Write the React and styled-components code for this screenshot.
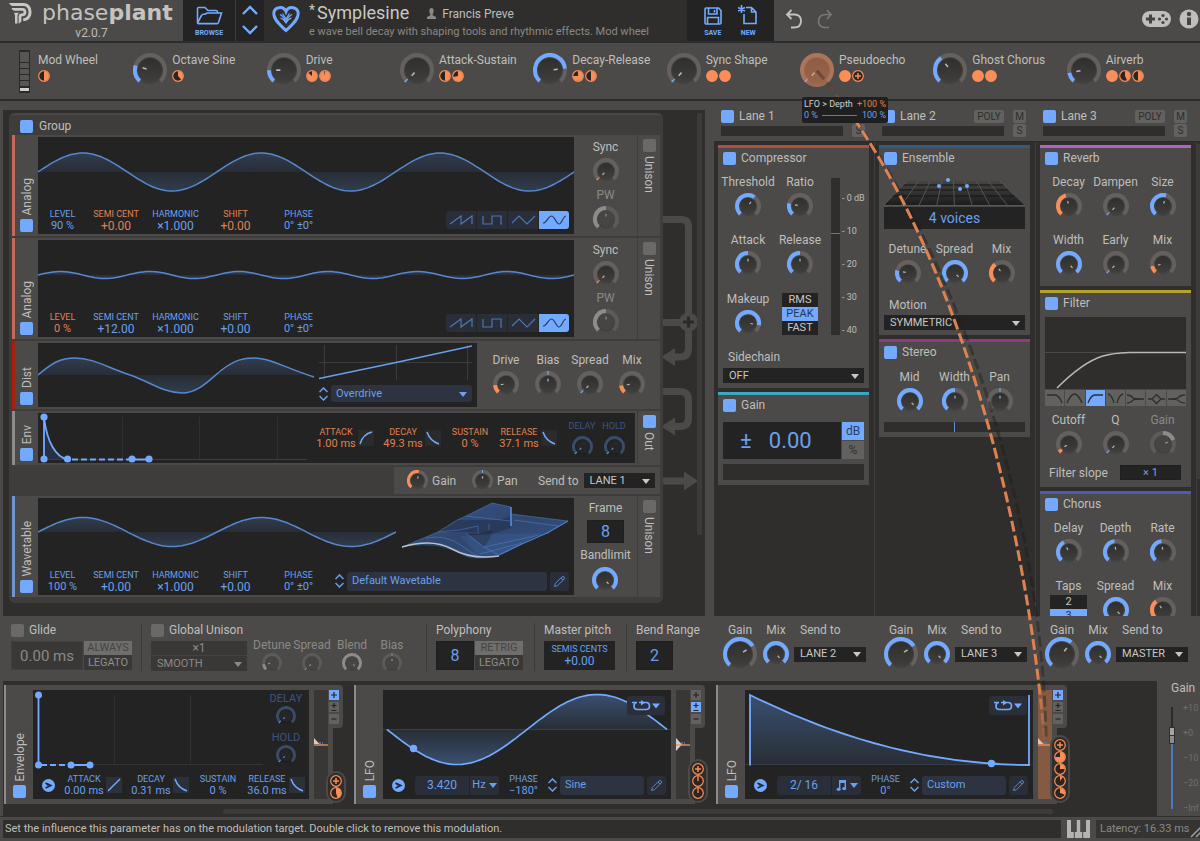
import React from "react";
import styled, { createGlobalStyle, css } from "styled-components";

const c = {
  panel: "#4b4a48",
  frame: "#3e3d3b",
  dark: "#2f2e2c",
  screen: "#232323",
  field: "#2d3340",
  text: "#bfbebc",
  muted: "#8a8986",
  blue: "#73aaff",
  blueText: "#6aa0ee",
  blueDim: "#3c5680",
  orange: "#f98e58",
  orangeText: "#e08151",
  line: "#2a2d30",
};

const GlobalStyle = createGlobalStyle`
  *, *::before, *::after { box-sizing: border-box; }
  body { margin: 0; background: ${c.panel}; color: ${c.text}; font: 12px/14px Roboto, "Liberation Sans", sans-serif; }
  button, input, select { font: inherit; color: inherit; margin: 0; padding: 0; border: 0; background: none; border-radius: 0; min-width: 0; }
  svg { display: block; flex: none; }
`;

const Page = styled.main`
  position: relative;
  display: flex;
  flex-direction: column;
  min-width: 1100px;
  overflow: hidden;
`;

/* ---------- shared controls ---------- */

const Tick = styled.input.attrs({ type: "checkbox" })`
  appearance: none;
  flex: none;
  width: 13px;
  height: 13px;
  border-radius: 2px;
  background: #6a6967;
  &:checked { background: ${c.blue}; }
`;

const TickLabel = styled.label`
  display: flex;
  align-items: center;
  gap: ${(p) => p.$gap || 5}px;
  white-space: nowrap;
`;

const KnobCell = styled.label`
  display: flex;
  flex-direction: column;
  align-items: center;
  gap: ${(p) => (p.$gap === undefined ? 4 : p.$gap)}px;
  white-space: nowrap;
  color: ${(p) => p.$color || "inherit"};
  font-size: ${(p) => p.$font || 12}px;
  min-width: 0;
`;

const KnobFace = styled.span`
  position: relative;
  display: block;
  flex: none;
`;

const HiddenRange = styled.input.attrs({ type: "range", min: 0, max: 1, step: "any" })`
  position: absolute;
  inset: 0;
  width: 100%;
  height: 100%;
  opacity: 0;
  cursor: pointer;
`;

const tones = {
  blue: { arc: c.blue, track: "#65605d", mark: "#cfcecc", body: "url(#knobBody)" },
  orange: { arc: c.orange, track: "#65605d", mark: "#cfcecc", body: "url(#knobBody)" },
  gray: { arc: "#8d8c8a", track: "#5d5b58", mark: "#a09f9c", body: "#464543" },
  navy: { arc: "#6a9cea", track: "#3a4c69", mark: "#6a9cea", body: "#252628" },
};

const polar = (m, r, deg) => {
  const a = ((deg - 90) * Math.PI) / 180;
  return [(m + r * Math.cos(a)).toFixed(2), (m + r * Math.sin(a)).toFixed(2)];
};

const arc = (m, r, a, b) => {
  const [x1, y1] = polar(m, r, a);
  const [x2, y2] = polar(m, r, b);
  return `M${x1} ${y1}A${r} ${r} 0 ${b - a > 180 ? 1 : 0} 1 ${x2} ${y2}`;
};

function Dial({ name, value = 0, from = 0, size = 26, tone = "blue", picked }) {
  const t = tones[tone];
  const m = size / 2;
  const w = size < 24 ? 3 : 4;
  const r = m - w / 2;
  const at = (v) => -137 + 274 * v;
  let a = at(Math.min(value, from));
  let b = at(Math.max(value, from));
  const thin = b - a < 4;
  if (thin) {
    a = a - (from ? 3 : 0);
    b = a + 6;
  }
  const body = m - w - 1;
  const [x1, y1] = polar(m, body * 0.3, at(value));
  const [x2, y2] = polar(m, body * 0.65, at(value));
  return (
    <KnobFace>
      <svg width={size} height={size} viewBox={`0 0 ${size} ${size}`}>
        <path d={arc(m, r, -137, 137)} fill="none" stroke={t.track} strokeWidth={w} />
        <path d={arc(m, r, a, b)} fill="none" stroke={t.arc} strokeWidth={w} />
        <circle cx={m} cy={m + 1} r={body + 1} fill="#000" opacity=".12" />
        <circle cx={m} cy={m} r={body} fill={t.body} />
        <path d={`M${x1} ${y1}L${x2} ${y2}`} stroke={t.mark} strokeWidth={size > 30 ? 1.6 : 1.2} opacity=".85" />
        {picked && <circle cx={m} cy={m} r={m} fill="#f08a58" opacity=".5" />}
      </svg>
      <HiddenRange defaultValue={value} aria-label={name} />
    </KnobFace>
  );
}

function Knob({ label, gap, color, font, ...rest }) {
  return (
    <KnobCell $gap={gap} $color={color} $font={font}>
      {label}
      <Dial name={label} {...rest} />
    </KnobCell>
  );
}

const SelectBox = styled.span`
  position: relative;
  display: block;
  flex: ${(p) => p.$flex || "none"};
  width: ${(p) => p.$width || "auto"};
  min-width: 0;
  &::after {
    content: "";
    display: ${(p) => (p.$caret === false ? "none" : "block")};
    position: absolute;
    right: 5px;
    top: 50%;
    margin-top: -2px;
    border: 4px solid transparent;
    border-top: 5px solid ${(p) => p.$caretColor || "#c8c7c5"};
    border-bottom: 0;
    pointer-events: none;
  }
`;

const SelectField = styled.select`
  appearance: none;
  display: block;
  width: 100%;
  height: ${(p) => p.$height || 15}px;
  padding-left: ${(p) => (p.$blue ? 5 : 6)}px;
  font-size: 11px;
  line-height: 14px;
  color: ${(p) => (p.$blue ? c.blueText : p.$dim ? c.muted : "#c8c7c5")};
  background: ${(p) => (p.$blue ? c.field : p.$dim ? "#393836" : c.screen)};
  border-radius: ${(p) => (p.$blue ? 3 : 0)}px;
`;

function Select({ name, value, height, blue, dim, width, flex, caret }) {
  return (
    <SelectBox $width={width} $flex={flex} $caret={caret} $caretColor={blue ? c.blueText : dim ? c.muted : null}>
      <SelectField aria-label={name} $height={height} $blue={blue} $dim={dim} defaultValue={value}>
        <option>{value}</option>
      </SelectField>
    </SelectBox>
  );
}

const Stack = styled.div`
  display: flex;
  flex-direction: column;
  gap: ${(p) => p.$gap || 0}px;
  width: ${(p) => p.$width}px;
  background: ${(p) => (p.$dim ? "#393836" : c.screen)};
`;

const StackItem = styled.button`
  height: 14px;
  font-size: 11px;
  line-height: 14px;
  text-align: center;
  color: ${(p) => (p.$on ? "#2b3648" : p.$dim ? "#8f8e8b" : "#c8c7c5")};
  background: ${(p) => (p.$on ? c.blue : "transparent")};
  ${(p) => p.$on && p.$dim && css`background: #6f6e6c; color: #454442;`}
`;

function Switch({ items, on, width, gap, dim }) {
  return (
    <Stack $width={width} $gap={gap} $dim={dim}>
      {items.map((t) => (
        <StackItem key={t} type="button" aria-pressed={t === on} $on={t === on} $dim={dim}>{t}</StackItem>
      ))}
    </Stack>
  );
}

const SpinBox = styled.span`
  display: flex;
  flex-direction: column;
  gap: 2px;
  width: 9px;
  flex: none;
`;

const SpinButton = styled.button`
  height: 6px;
  color: ${c.blueText};
`;

function Spin({ name }) {
  return (
    <SpinBox>
      <SpinButton type="button" aria-label={`Previous ${name}`}>
        <svg width="9" height="6" fill="none" stroke="currentColor" strokeWidth="1.5"><path d="M.5 5L4.500 1L8.500 5" /></svg>
      </SpinButton>
      <SpinButton type="button" aria-label={`Next ${name}`}>
        <svg width="9" height="6" fill="none" stroke="currentColor" strokeWidth="1.5"><path d="M.5 1L4.500 5L8.500 1" /></svg>
      </SpinButton>
    </SpinBox>
  );
}

const PencilButton = styled.button`
  flex: none;
  display: grid;
  place-items: center;
  width: 19px;
  height: 19px;
  border-radius: 3px;
  background: #2a2e38;
  color: #5b89cc;
`;

function Pencil({ name }) {
  return (
    <PencilButton type="button" aria-label={name}>
      <svg width="13" height="13" fill="none" stroke="currentColor"><path d="M1.500 11.500L2.300 8.500L9 1.800Q10 1 11 2Q12 3 11.200 4L4.500 10.700ZM8 3L10 5" /></svg>
    </PencilButton>
  );
}

function Dot({ fill = 1, plus, thin }) {
  const angle = fill * 360;
  const [x, y] = polar(6, 5, angle);
  return (
    <svg width="12" height="12" viewBox="0 0 12 12">
      <circle cx="6" cy="6" r="5.300" fill="#2b2421" stroke={c.orange} strokeWidth="1.200" />
      {plus && <path d="M6 3V9M3 6H9" stroke={c.orange} strokeWidth="1.500" />}
      {thin && <path d="M6 6V1" stroke={c.orange} strokeWidth="1.300" />}
      {!plus && !thin && (fill >= 1
        ? <circle cx="6" cy="6" r="5.500" fill={c.orange} />
        : <path d={`M6 6V1A5 5 0 ${fill > 0.5 ? 1 : 0} 1 ${x} ${y}Z`} fill={c.orange} />)}
    </svg>
  );
}

/* ---------- header ---------- */

const Header = styled.header`
  display: flex;
  height: 43px;
  border-bottom: 2px solid ${c.line};
`;

const Brand = styled.div`
  width: 183px;
  flex: none;
  text-align: center;
`;

const BrandRow = styled.div`
  display: flex;
  gap: 9px;
  height: 26px;
  padding: 3px 0 0 9px;
`;

const BrandName = styled.span`
  font: 22px/20px "DejaVu Sans", sans-serif;
  color: #c4c3c1;
  b { font-weight: 700; }
`;

const ToolGroup = styled.div`
  display: flex;
  flex: none;
  width: ${(p) => p.$width}px;
  background: ${c.screen};
  padding: 0 ${(p) => p.$pad || 0}px;
`;

const ToolButton = styled.button`
  flex: 1;
  display: flex;
  flex-direction: column;
  align-items: center;
  justify-content: flex-end;
  gap: 4px;
  padding-bottom: 3px;
  font-size: 7px;
  line-height: 9px;
  font-weight: 700;
  color: ${c.blue};
`;

const StepColumn = styled.div`
  display: flex;
  flex-direction: column;
  justify-content: space-between;
  align-items: center;
  width: 29px;
  flex: none;
  padding: 5px 0 6px;
  background: ${c.screen};
  border-left: 1px solid ${c.frame};
`;

const StepButton = styled.button`
  color: ${c.blue};
`;

const Preset = styled.div`
  display: flex;
  flex: none;
  gap: 9px;
  width: 423px;
  padding-left: 8px;
  background: ${c.dark};
  svg { margin-top: 5px; }
`;

const PresetText = styled.div`
  flex: 1;
  min-width: 0;
`;

const PresetTop = styled.div`
  display: flex;
  align-items: center;
  gap: 18px;
  height: 25px;
`;

const PresetName = styled.h1`
  display: flex;
  gap: 2px;
  margin: 0;
  font-size: 18px;
  line-height: 24px;
  font-weight: 400;
  color: #c9c8c6;
`;

const Changed = styled.span`
  font-size: 14px;
  line-height: 18px;
`;

const Author = styled.span`
  display: flex;
  gap: 6px;
  padding-top: 2px;
  svg { margin-top: 1px; }
`;

const Ticker = styled.p`
  margin: 0;
  font-size: 11px;
  line-height: 14px;
  white-space: nowrap;
  color: ${c.muted};
`;

const HeaderEnd = styled.div`
  flex: 1;
  display: flex;
  align-items: center;
  gap: 8px;
  padding: 0 1px 3px 11px;
`;

const GhostButton = styled.button`
  color: ${(p) => (p.$dim ? "#7a7976" : "#c4c3c1")};
  margin-left: ${(p) => (p.$push ? "auto" : p.$dim ? "6px" : 0)};
`;

function TopBar() {
  return (
    <Header>
      <Brand>
        <BrandRow>
          <svg width="24" height="21" viewBox="0 0 24 21" fill="#c9c8c6">
            <path d="M0 0H14.500C20 0 22.500 4.500 22.500 9.200C22.500 14.500 19 18 14.200 18V15.300C17.500 15.300 19.500 12.500 19.500 9.200C19.500 5.500 17.500 3 14.500 3H4C2 3 .8 1.500 0 0Z" />
            <path d="M2.500 5H13.500C18.800 5 18.800 13.300 13.500 13.300C12.600 13.300 12.400 13.600 12.400 14.500V18.500L10 20.500H9.600V13.500C9.600 11.500 10.800 10.500 12.500 10.500H13.300C15 10.500 15 7.800 13.300 7.800H6C4 7.800 3.200 6.600 2.500 5Z" />
            <path d="M5 9.800H10.500C8.500 10.800 8.500 12 8.500 13.500V20.500H6V13C6 11.500 5.500 11 5 9.800Z" />
          </svg>
          <BrandName>phase<b>plant</b></BrandName>
        </BrandRow>
        v2.0.7
      </Brand>
      <ToolGroup $width={52}>
        <ToolButton type="button">
          <svg width="27" height="19" fill="none" stroke="currentColor" strokeWidth="1.600"><path d="M1.500 17V2.500Q1.500 1.500 2.500 1.500H9L12 4.500H20Q21.500 4.500 21.500 6V7.500M1.500 17L5.500 9.500Q6 8.200 7.200 8.200L9 8.200L11 7H25.500L22.500 16.500Q22 17.600 21 17.600H2.500Q1.500 17.600 1.500 17Z" /></svg>
          BROWSE
        </ToolButton>
      </ToolGroup>
      <StepColumn>
        <StepButton type="button" aria-label="Previous preset"><svg width="16" height="10" fill="none" stroke="currentColor" strokeWidth="2.400"><path d="M1 9L8 2L15 9" /></svg></StepButton>
        <StepButton type="button" aria-label="Next preset"><svg width="16" height="10" fill="none" stroke="currentColor" strokeWidth="2.400"><path d="M1 1L8 8L15 1" /></svg></StepButton>
      </StepColumn>
      <Preset>
        <svg width="28" height="28" fill="none" stroke={c.blue} strokeWidth="3"><path d="M14 25.500C9 20.500 1.800 15.500 1.800 8.800C1.800 1.500 11.500 .5 14 6.500C16.500 .5 26.200 1.500 26.200 8.800C26.200 15.500 19 20.500 14 25.500Z" /><path d="M8 9.500Q12 11.500 14 17Q16 11.500 20 9.500M10.500 8.500L14 14L17.500 8.500M8.500 13Q12 14 14 18Q16 14 19.500 13" strokeWidth="1.200" /></svg>
        <PresetText>
          <PresetTop>
            <PresetName><Changed>*</Changed>Symplesine</PresetName>
            <Author>
              <svg width="9" height="11" fill="#8a8986"><path d="M4.500 0C7.300 0 7 4.800 5.600 6L5.700 7.300L9 9V11H0V9L3.300 7.300L3.400 6C2 4.800 1.700 0 4.500 0Z" /></svg>
              Francis Preve
            </Author>
          </PresetTop>
          <Ticker>e wave bell decay with shaping tools and rhythmic effects. Mod wheel</Ticker>
        </PresetText>
      </Preset>
      <ToolGroup $width={87} $pad={8}>
        <ToolButton type="button">
          <svg width="18" height="18" fill="none" stroke="currentColor" strokeWidth="1.600"><path d="M1 2Q1 1 2 1H14.500L17 3.500V16Q17 17 16 17H2Q1 17 1 16ZM4.500 1V7H13V1M3.500 17V10.500H14.500V17M10.500 3V5.500" /></svg>
          SAVE
        </ToolButton>
        <ToolButton type="button">
          <svg width="20" height="20" fill="none" stroke="currentColor" strokeWidth="1.600"><path d="M8 2.500H13.500L18 7V18.500H6V9M13.500 2.500V7H18M3.500 0V8M0 2.500L7 6M7 2.500L0 6" /></svg>
          NEW
        </ToolButton>
      </ToolGroup>
      <HeaderEnd>
        <GhostButton type="button" aria-label="Undo"><svg width="18" height="20" fill="none" stroke="currentColor" strokeWidth="1.800"><path d="M6.500 1L2 5.500L6.500 10M2 5.500H10Q16 6 16 12Q16 18.500 9 18.500H6" /></svg></GhostButton>
        <GhostButton type="button" aria-label="Redo" $dim><svg width="16" height="20" fill="none" stroke="currentColor" strokeWidth="1.600"><path d="M10 1L14 5.500L10 10M14 5.500H8.500Q1.500 6 1.500 12Q1.500 18.500 8 18.500H12" /></svg></GhostButton>
        <GhostButton type="button" aria-label="Controller" $push>
          <svg width="29" height="18"><rect y="1" width="29" height="16" rx="8" fill="#bfbebc" /><path d="M8.500 4.500V13.500M4 9H13" stroke="#454442" strokeWidth="3" /><g fill="#454442"><circle cx="21" cy="5.500" r="1.600" /><circle cx="21" cy="12.500" r="1.600" /><circle cx="17.500" cy="9" r="1.600" /><circle cx="24.500" cy="9" r="1.600" /></g></svg>
        </GhostButton>
        <GhostButton type="button" aria-label="About">
          <svg width="20" height="20"><circle cx="10" cy="10" r="9.500" fill="#bfbebc" /><path d="M10 8.500V16" stroke="#454442" strokeWidth="4" /><circle cx="10" cy="5" r="2.200" fill="#454442" /></svg>
        </GhostButton>
      </HeaderEnd>
    </Header>
  );
}

/* ---------- macro row ---------- */

const MacroBar = styled.section`
  display: grid;
  grid-template-columns: repeat(9, minmax(0, 1fr));
  height: 58px;
  border-bottom: 2px solid ${c.line};
`;

const Macro = styled.div`
  position: relative;
  display: flex;
  gap: ${(p) => (p.$wheel ? 8 : 5)}px;
  padding: 10px 0 0 ${(p) => (p.$wheel ? 19 : 0)}px;
  white-space: nowrap;
`;

const MacroText = styled.div`
  display: flex;
  flex-direction: column;
  gap: 3px;
`;

const Dots = styled.div`
  display: flex;
  gap: 1px;
`;

const WheelArt = styled.svg`
  margin-top: -3px;
`;

const Tip = styled.div`
  position: absolute;
  z-index: 6;
  left: 2px;
  top: 54px;
  width: 86px;
  padding: 2px;
  border-radius: 2px;
  background: #1f1f1f;
  color: #d3d2d0;
  font-size: 9px;
  line-height: 11px;
`;

const TipRow = styled.div`
  display: flex;
  align-items: center;
  justify-content: space-between;
  color: ${(p) => (p.$blue ? c.blueText : "inherit")};
`;

const TipHot = styled.span`
  color: ${c.orangeText};
`;

const TipLine = styled.span`
  width: 35px;
  height: 1px;
  background: #777;
`;

const macros = [
  ["Octave Sine", 0.235, [0.38]],
  ["Drive", 0.167, [0.86, 0.97]],
  ["Attack-Sustain", 0, [0.5, 0.72]],
  ["Decay-Release", 0.81, [0.75, 0.5]],
  ["Sync Shape", 0, [1, 1]],
  ["Pseudoecho", 0, [1, "plus"]],
  ["Ghost Chorus", 0.37, [1, 1]],
  ["Airverb", 0.13, [1, 0.43, 0.5]],
];

function Macros() {
  return (
    <MacroBar>
      <Macro $wheel>
        <WheelArt width="11" height="43">
          <rect width="11" height="43" rx="1" fill="#2a2927" />
          {[2, 7, 13, 19, 25, 31].map((y) => <rect key={y} x="1" y={y} width="9" height="5" fill="#575655" />)}
          <rect x="1" y="38" width="9" height="3" fill="#d0cfcd" />
        </WheelArt>
        <MacroText>Mod Wheel<Dots><Dot fill={0.5} /></Dots></MacroText>
      </Macro>
      {macros.map(([name, value, dots]) => (
        <Macro key={name}>
          <Dial name={name} value={value} size={34} picked={name === "Pseudoecho"} />
          <MacroText>
            {name}
            <Dots>{dots.map((d, i) => <Dot key={i} fill={d === "plus" ? 0 : d} plus={d === "plus"} />)}</Dots>
          </MacroText>
          {name === "Pseudoecho" && (
            <Tip role="tooltip">
              <TipRow><span>LFO &gt; Depth</span><TipHot>+100 %</TipHot></TipRow>
              <TipRow $blue><span>0 %</span><TipLine /><span>100 %</span></TipRow>
            </Tip>
          )}
        </Macro>
      ))}
    </MacroBar>
  );
}

/* ---------- generators ---------- */

const Split = styled.div`
  display: grid;
  grid-template-columns: minmax(0, 47fr) minmax(0, 33fr);
`;

const GeneratorArea = styled.section`
  padding: 9px 0 0 3px;
`;

const GeneratorPanel = styled.div`
  display: flex;
  padding: 3px 0 0 6px;
  background: ${c.dark};
`;

const Group = styled.div`
  flex: 1;
  min-width: 0;
  margin-bottom: 13px;
  padding: 0 3px 6px;
  border-top: 2px solid #494846;
  border-radius: 6px;
  background: ${c.frame};
`;

const GroupHead = styled.div`
  height: 20px;
  padding: 4px 8px 0;
`;

const Rows = styled.div`
  display: flex;
  flex-direction: column;
  gap: 2px;
`;

const Row = styled.article`
  display: flex;
  height: ${(p) => p.$height}px;
  border-left: 3px solid ${(p) => p.$stripe};
  background: ${c.panel};
`;

const Handle = styled.label`
  display: flex;
  flex-direction: column;
  justify-content: flex-end;
  align-items: center;
  gap: 4px;
  flex: none;
  width: ${(p) => p.$width || 23}px;
  padding-bottom: ${(p) => p.$bottom || 4}px;
`;

const UpText = styled.span`
  writing-mode: vertical-rl;
  transform: rotate(180deg);
`;

const DownText = styled.span`
  writing-mode: vertical-rl;
`;

const SideTab = styled.label`
  display: flex;
  flex-direction: column;
  align-items: center;
  gap: 4px;
  flex: none;
  width: 23px;
  padding-top: 4px;
  border-left: 1px solid ${c.frame};
`;

const Screen = styled.div`
  flex: 1;
  min-width: 0;
  display: flex;
  flex-direction: ${(p) => (p.$row ? "row" : "column")};
  margin: 2px 0;
  background: ${c.screen};
`;

const WaveSvg = styled.svg`
  width: 100%;
  min-width: 0;
  flex: ${(p) => (p.$grow ? "1 1 0" : "none")};
  margin-right: ${(p) => p.$right || 0}px;
  path { vector-effect: non-scaling-stroke; }
`;

const sine = (w, mid, amp, cycles) => {
  const pts = [];
  for (let x = 0; x <= w; x += 3) pts.push(`${x} ${(mid - amp * Math.sin((x / w) * cycles * 2 * Math.PI)).toFixed(1)}`);
  pts.push(`${w} ${mid}`);
  return `M${pts.join("L")}`;
};

function Wave({ w, h, mid, d, grow, right }) {
  return (
    <WaveSvg $grow={grow} $right={right} height={h} viewBox={`0 0 ${w} ${h}`} preserveAspectRatio="none">
      <path d={`${d}V${mid}H0Z`} fill="url(#waveFill)" />
      <path d={d} fill="none" stroke="#5688cf" strokeWidth="1.500" />
    </WaveSvg>
  );
}

const ParamRow = styled.div`
  display: flex;
  align-items: center;
  padding: 2px 5px 0 0;
`;

const ParamCell = styled.label`
  display: block;
  flex: none;
  width: ${(p) => p.$width}px;
  text-align: center;
  white-space: nowrap;
  font-size: 9px;
  line-height: ${(p) => p.$line || 12}px;
  color: ${(p) => (p.$hot ? c.orangeText : c.blueText)};
`;

const ParamInput = styled.input`
  display: block;
  width: 100%;
  height: ${(p) => p.$line || 12}px;
  text-align: center;
  font-size: ${(p) => (p.$wide ? 12 : 11)}px;
  line-height: ${(p) => p.$line || 12}px;
`;

function Param({ name, value, width, hot, wide, line }) {
  return (
    <ParamCell $width={width} $hot={hot} $line={line}>
      {name}
      <ParamInput defaultValue={value} $wide={wide} $line={line} />
    </ParamCell>
  );
}

function OscParams({ level, semi, hotLevel, hotSemi, hotShift }) {
  return (
    <>
      <Param name="LEVEL" value={level} width={49} hot={hotLevel} />
      <Param name="SEMI CENT" value={semi} width={58} hot={hotSemi} wide />
      <Param name="HARMONIC" value="×1.000" width={61} wide />
      <Param name="SHIFT" value="+0.00" width={59} hot={hotShift} wide />
      <Param name="PHASE" value="0° ±0°" width={67} />
    </>
  );
}

const ShapeGroup = styled.div`
  display: grid;
  grid-template-columns: repeat(4, 30px);
  gap: 1px;
  margin-left: auto;
  border-radius: 3px;
  overflow: hidden;
`;

const ShapeButton = styled.button`
  height: 18px;
  display: grid;
  place-items: center;
  background: ${(p) => (p.$on ? c.blue : "#292e39")};
  color: ${(p) => (p.$on ? "#2b3f63" : "#4d76b5")};
`;

const shapes = [
  ["Saw", "M1 10L12 2V10L23 2V10"],
  ["Square", "M3 2V10H12V2H21V10H22"],
  ["Triangle", "M1 9L8 2L16 10L24 2"],
  ["Sine", "M1 9C5 9 6 2 9.500 2S14 10 17 10S21 2 24 2"],
];

const SideKnobs = styled.div`
  display: flex;
  flex-direction: column;
  align-items: center;
  gap: ${(p) => p.$gap || 4}px;
  flex: none;
  width: 63px;
  padding-top: 5px;
`;

const NumberField = styled.input`
  width: ${(p) => p.$width}px;
  height: ${(p) => p.$height}px;
  text-align: center;
  font-size: ${(p) => p.$size || 16}px;
  color: ${(p) => (p.$dim ? c.muted : c.blueText)};
  background: ${(p) => (p.$dim ? "#393836" : c.screen)};
  border: 1px solid ${(p) => (p.$dim ? "#413f3d" : "#1f1f1f")};
`;

const FieldLabel = styled.label`
  display: contents;
`;

function Unison() {
  return <SideTab><Tick /><DownText>Unison</DownText></SideTab>;
}

function Analog({ amp, cycles, ...params }) {
  return (
    <Row $height={101} $stripe="#c4695b">
      <Handle><UpText>Analog</UpText><Tick defaultChecked /></Handle>
      <Screen>
        <Wave w={536} h={69} mid={35} d={sine(536, 35, amp, cycles)} />
        <ParamRow>
          <OscParams {...params} />
          <ShapeGroup>
            {shapes.map(([n, d]) => (
              <ShapeButton key={n} type="button" aria-label={n} $on={n === "Sine"}>
                <svg width="25" height="12" fill="none" stroke="currentColor" strokeWidth="1.200"><path d={d} /></svg>
              </ShapeButton>
            ))}
          </ShapeGroup>
        </ParamRow>
      </Screen>
      <SideKnobs>
        <Knob label="Sync" tone="orange" />
        <Knob label="PW" tone="gray" value={0.5} color={c.muted} />
      </SideKnobs>
      <Unison />
    </Row>
  );
}

const ShaperColumn = styled.div`
  flex: none;
  width: 158px;
  padding-right: 5px;
`;

const PickerRow = styled.div`
  display: flex;
  align-items: center;
  gap: ${(p) => p.$gap || 3}px;
  flex: ${(p) => (p.$grow ? 1 : "none")};
  min-width: 0;
  padding-top: ${(p) => p.$top || 0}px;
`;

const KnobRow = styled.div`
  display: grid;
  grid-template-columns: repeat(${(p) => p.$n}, ${(p) => p.$col || "minmax(0, 1fr)"});
  flex: none;
  row-gap: 14px;
  padding: ${(p) => p.$pad || "0"};
`;

function Dist() {
  return (
    <Row $height={68} $stripe="#a81f10">
      <Handle><UpText>Dist</UpText><Tick defaultChecked /></Handle>
      <Screen $row>
        <Wave grow right={4} w={277} h={63} mid={32} d="M0 32C14 20 22 15 37 15C55 15 68 24 95 33C115 41 128 50 144 50C162 50 175 33 185 26C197 17 205 15 216 15C232 15 250 26 276 34" />
        <ShaperColumn>
          <svg width="153" height="40" fill="none">
            <path d="M0 19.500H153M5.500 2V37M77.500 2V37M148.500 2V37" stroke="#3d3c3b" />
            <path d="M0 35.500L77 19.500L153 3" stroke={c.blueText} strokeWidth="1.500" />
          </svg>
          <PickerRow $top={2}><Spin name="shape" /><Select name="Shape" value="Overdrive" blue height={17} flex="1" /></PickerRow>
        </ShaperColumn>
      </Screen>
      <KnobRow $n={4} $col="42px" $pad="12px 7px 0 8px">
        <Knob label="Drive" tone="orange" value={0.15} />
        <Knob label="Bias" value={0.5} from={0.5} />
        <Knob label="Spread" />
        <Knob label="Mix" tone="orange" value={0.14} />
      </KnobRow>
    </Row>
  );
}

const EnvGraph = styled.svg`
  flex: 1 1 0;
  min-width: 0;
`;

const EnvControls = styled.div`
  display: flex;
  align-items: center;
  gap: 9px;
  flex: none;
  padding-right: 5px;
`;

const Stage = styled.div`
  display: flex;
  align-items: center;
  gap: 2px;
`;

const CurveButton = styled.button`
  width: 16px;
  height: 16px;
  background: ${(p) => (p.$lit ? "#2b303b" : "#2b2b2b")};
  color: ${c.blue};
`;

const curves = {
  out: "M2 14Q5 4 14 2",
  fall: "M2 2Q5 11 14 14",
  line: "M2 14L14 2",
};

function EnvStage({ name, value, hot, curve, lit }) {
  return (
    <Stage>
      <Param name={name} value={value} width={40} hot={hot} line={11} />
      {curve && (
        <CurveButton type="button" $lit={lit} aria-label={`${name} curve`}>
          <svg width="16" height="16" fill="none" stroke="currentColor" strokeWidth="1.500"><path d={curves[curve]} /></svg>
        </CurveButton>
      )}
    </Stage>
  );
}

const SideTabSpacer = styled.span`
  width: 2px;
`;

function Env() {
  return (
    <Row $height={54} $stripe="#8d8c8a">
      <Handle><UpText>Env</UpText><Tick defaultChecked /></Handle>
      <Screen $row>
        <EnvGraph height="50" viewBox="0 0 278 50" preserveAspectRatio="xMinYMid meet" fill="none">
          <path d="M84.500 4V46M161.500 4V46M239.500 4V46" stroke="#303030" />
          <path d="M6 46.500H269" stroke="#3f3e3d" />
          <path d="M6 4C9 30 18 44 29.500 46.500H6Z" fill="#2b3b57" opacity=".6" />
          <path d="M6 46.500V4C9 30 18 44 29.500 46.500M94 46.500H111" stroke={c.blue} strokeWidth="1.800" />
          <path d="M34 46.500H94" stroke={c.blue} strokeWidth="1.800" strokeDasharray="6 3" />
          <g fill={c.blue}><circle cx="6" cy="4" r="3.600" /><circle cx="6" cy="46" r="3.600" /><circle cx="29.500" cy="46" r="3.600" /><circle cx="94" cy="46" r="3.600" /><circle cx="111" cy="46" r="3.600" /></g>
        </EnvGraph>
        <EnvControls>
          <EnvStage name="ATTACK" value="1.00 ms" hot curve="out" />
          <EnvStage name="DECAY" value="49.3 ms" hot curve="fall" />
          <EnvStage name="SUSTAIN" value="0 %" hot />
          <EnvStage name="RELEASE" value="37.1 ms" hot curve="fall" />
          <KnobRow $n={2} $col="32px">
            <Knob label="DELAY" tone="navy" size={21} gap={3} font={9} color={c.blueDim} />
            <Knob label="HOLD" tone="navy" size={21} gap={3} font={9} color={c.blueDim} />
          </KnobRow>
        </EnvControls>
      </Screen>
      <SideTabSpacer />
      <SideTab><Tick defaultChecked /><DownText>Out</DownText></SideTab>
    </Row>
  );
}

const OutStrip = styled.div`
  display: flex;
  align-items: center;
  gap: 5px;
  align-self: flex-end;
  width: 266px;
  height: 27px;
  padding: 0 5px 0 13px;
  background: ${c.panel};
  white-space: nowrap;
`;

const InlineKnob = styled.label`
  display: flex;
  align-items: center;
  gap: 4px;
  width: ${(p) => p.$width}px;
`;

const FramePicker = styled(PickerRow)`
  padding-left: 3px;
`;

const WaveTop = styled.div`
  display: flex;
  padding-right: 4px;
`;

function Wavetable() {
  return (
    <Row $height={101} $stripe="#6f95cf">
      <Handle><UpText>Wavetable</UpText><Tick defaultChecked /></Handle>
      <Screen>
        <WaveTop>
          <Wave grow w={358} h={69} mid={34} d={sine(358, 34, 14.5, 2)} />
          <svg width="174" height="69" viewBox="-4 -2 174 69" fill="none">
            <path d="M2 47L38 32L57 20L66 16L92 3L111 7V14L168 21L149 32L140 34L122 44L99 55Q78 62 62 55Q40 41 2 47Z" fill="url(#tableFill)" />
            <path d="M57 20L100 20L111 16V28L92 34L70 32L38 32Z" fill="#223048" opacity=".55" />
            <path d="M66 33L78 34L92 30L90 38L84 47L76 40Z" fill="#232b38" opacity=".7" />
            <path d="M60 36L78 54L99 55L122 43L149 33L92 34Z" fill="#3d629e" opacity=".3" />
            <path d="M2 47L38 32L57 20M38 32Q60 31 78 26M57 20L66 16L92 3L111 7M66 16L110 21M84 47L149 33M80 54L122 43M66 33Q74 40 84 47L99 55M26 38Q46 34 62 46T84 57M111 14L168 21M114 20L158 26M78 26V33M89 24V30" stroke="#5583cb" strokeWidth=".9" opacity=".55" />
            <path d="M111 7V26" stroke="#5c8fe0" strokeWidth="1.500" />
            <path d="M168 21L149 32L122 44L99 55" stroke="#4e7fca" strokeWidth="1.200" />
            <path d="M2 47Q32 38 52 49T99 56" stroke="#b9c0cc" strokeWidth="1.600" />
          </svg>
        </WaveTop>
        <ParamRow>
          <OscParams level="100 %" semi="+0.00" />
          <FramePicker $grow $gap={3}>
            <Spin name="wavetable" />
            <Select name="Wavetable" value="Default Wavetable" blue height={19} flex="1" caret={false} />
            <Pencil name="Edit wavetable" />
          </FramePicker>
        </ParamRow>
      </Screen>
      <SideKnobs $gap={5}>
        <FieldLabel>Frame<NumberField $width={37} $height={23} defaultValue="8" /></FieldLabel>
        <Knob label="Bandlimit" value={1} gap={5} />
      </SideKnobs>
      <Unison />
    </Row>
  );
}

function Wires() {
  return (
    <svg width="42" height="503" viewBox="0 3 42 503" fill="none" stroke={c.panel} strokeWidth="7">
      <path d="M0 109.500H18Q25.500 109.500 25.500 117V238Q25.500 247 17 247H10M0 212.500H25M0 281.500H17Q25.500 281.500 25.500 290V308Q25.500 316.500 17 316.500H10M0 371H22" />
      <g fill={c.panel} stroke="none">
        <path d="M-2 247L12 238V256ZM-2 316.500L12 307.500V325.500ZM35 371L21 361.500V380.500Z" />
        <circle cx="25.500" cy="212" r="9.500" />
      </g>
      <path d="M25.500 206.500V217.500M20 212H31" stroke="#2b2a29" strokeWidth="3" />
      <rect x="34" y="3" width="5" height="422" rx="2" fill="#3c3b39" stroke="none" />
    </svg>
  );
}

function Generators() {
  return (
    <GeneratorArea>
      <GeneratorPanel>
        <Group>
          <GroupHead><TickLabel $gap={6}><Tick defaultChecked />Group</TickLabel></GroupHead>
          <Rows>
            <Analog amp={19} cycles={3} level="90 %" semi="+0.00" hotSemi hotShift />
            <Analog amp={3.5} cycles={6} level="0 %" semi="+12.00" hotLevel />
            <Dist />
            <Env />
            <OutStrip>
              <InlineKnob $width={60}><Dial name="Gain" size={21} tone="orange" value={0.53} />Gain</InlineKnob>
              <InlineKnob $width={61}><Dial name="Pan" size={21} value={0.5} from={0.5} />Pan</InlineKnob>
              <span>Send to</span>
              <Select name="Send to" value="LANE 1" flex="1" />
            </OutStrip>
            <Wavetable />
          </Rows>
        </Group>
        <Wires />
      </GeneratorPanel>
    </GeneratorArea>
  );
}

/* ---------- effect lanes ---------- */

const LaneArea = styled.section`
  display: flex;
  flex-direction: column;
  padding-left: 9px;
`;

const LaneGrid = styled.div`
  display: grid;
  grid-template-columns: repeat(3, minmax(0, 1fr)) ${(p) => p.$rail || 3}px;
`;

const LaneHead = styled.div`
  display: grid;
  grid-template-columns: minmax(0, 1fr) 30px 13px;
  align-items: center;
  column-gap: 9px;
  row-gap: 1px;
  padding: 8px 10px 4px 7px;
`;

const ChipButton = styled.button`
  height: 13px;
  border-radius: 2px;
  background: #62615f;
  color: #2f2e2c;
  font-size: 10px;
  line-height: 13px;
  text-align: center;
`;

const Meter = styled.div`
  grid-column: ${(p) => (p.$span ? "1 / 3" : "auto")};
  height: ${(p) => p.$height}px;
  background: ${c.dark};
`;

const LaneBodies = styled(LaneGrid)`
  flex: 1 1 0px;
  min-height: 0;
  overflow: hidden;
  background: ${c.dark};
  border-top: 1px solid #2a2a29;
`;

const LaneBody = styled.div`
  display: flex;
  flex-direction: column;
  gap: 4px;
  min-height: 0;
  padding: 3px 5px 0 4px;
  border-right: 1px solid #403f3d;
`;

const ScrollRail = styled.div`
  height: 335px;
  margin-top: 2px;
  background: #3c3b39;
`;

const Card = styled.article`
  flex: none;
  padding: 0 5px ${(p) => p.$bottom || 5}px;
  border-top: 3px solid ${(p) => p.$stripe};
  background: ${c.panel};
`;

const CardHead = styled.div`
  height: 21px;
  padding-top: 3px;
`;

const CardLabel = styled.div`
  padding: ${(p) => p.$pad || "14px 5px 4px"};
`;

const CompBody = styled.div`
  display: flex;
  gap: 5px;
  padding-top: 6px;
  margin-left: -1px;
`;

const StackCell = styled.div`
  display: grid;
  justify-items: center;
  align-content: start;
  padding-top: ${(p) => p.$top}px;
`;

const LevelMeter = styled.div`
  display: flex;
  gap: 2px;
  padding-top: 3px;
`;

const LevelColumn = styled.div`
  width: 9px;
  height: 157px;
  padding-top: 55px;
  background: ${c.dark};
`;

const LevelMark = styled.div`
  height: 1px;
  background: #4d7ac0;
`;

const Scale = styled.ol`
  list-style: none;
  margin: 0;
  padding: 15px 0 0;
  font-size: 9px;
  line-height: 11px;
  display: grid;
  row-gap: 22px;
  align-content: start;
  white-space: nowrap;
`;

const GainBody = styled.div`
  display: flex;
  gap: 1px;
  padding: 6px 0 4px;
`;

const GainReadout = styled.label`
  flex: 1;
  min-width: 0;
  display: flex;
  align-items: center;
  gap: 17px;
  height: 37px;
  padding-left: 17px;
  background: ${c.screen};
  color: ${c.blueText};
  font-size: 22px;
`;

const GainInput = styled.input`
  width: 60px;
`;

const UnitButton = styled.button`
  display: block;
  width: 22px;
  height: 18px;
  margin-bottom: 1px;
  font-size: 12px;
  background: ${(p) => (p.$on ? c.blue : "#62615f")};
  color: ${(p) => (p.$on ? "#2b3f63" : "#32312f")};
`;

const Voices = styled.button`
  display: block;
  width: 100%;
  height: 22px;
  font-size: 14px;
  color: ${c.blueText};
  background: ${c.screen};
`;

const CenterMeter = styled(Meter)`
  display: grid;
  justify-content: center;
  margin-top: 8px;
  &::before { content: ""; width: 1px; background: #5e8fdc; }
`;

const FilterButtons = styled.div`
  display: grid;
  grid-template-columns: repeat(7, minmax(0, 1fr));
  gap: 1px;
  margin-top: 1px;
`;

const FilterButton = styled.button`
  height: 16px;
  display: grid;
  place-items: center;
  background: ${(p) => (p.$on ? c.blue : "#62615f")};
  color: #2f2e2c;
`;

const SlopeRow = styled.label`
  display: flex;
  align-items: center;
  justify-content: space-between;
  padding: 8px 5px 2px 4px;
`;

const Plot = styled.svg`
  width: 100%;
`;

const filterIcons = [
  ["Low pass", "M1 3H9Q13 3 16 11"],
  ["Band pass", "M1 11Q5 2 8.500 2T16 11"],
  ["High pass", "M1 11Q4 3 8 3H16"],
  ["Notch", "M1 2Q5 3 7 11M16 2Q12 3 10 11"],
  ["Low shelf", "M0 3Q4 3 6 6Q7 7 17 7M0 11Q4 11 6 8Q7 7 17 7"],
  ["Peak", "M0 7H4L8.500 2.500L13 7H17M4 7L8.500 11.500L13 7"],
  ["High shelf", "M17 3Q12 3 10 6Q9 7 0 7M17 11Q12 11 10 8Q9 7 0 7"],
];

function FxCard({ name, stripe, bottom, children }) {
  return (
    <Card $stripe={stripe} $bottom={bottom}>
      <CardHead><TickLabel><Tick defaultChecked />{name}</TickLabel></CardHead>
      {children}
    </Card>
  );
}

function Compressor() {
  return (
    <FxCard name="Compressor" stripe="#b04f3a">
      <CompBody>
        <KnobRow $n={2} $col="52px">
          <Knob label="Threshold" value={0.63} />
          <Knob label="Ratio" value={0.22} />
          <Knob label="Attack" value={0.5} />
          <Knob label="Release" value={0.5} />
          <Knob label="Makeup" value={0.87} />
          <StackCell $top={1}><Switch width={36} items={["RMS", "PEAK", "FAST"]} on="PEAK" /></StackCell>
        </KnobRow>
        <LevelMeter>
          <LevelColumn><LevelMark /></LevelColumn>
          <Scale><li>- 0 dB</li><li>- 10</li><li>- 20</li><li>- 30</li><li>- 40</li></Scale>
        </LevelMeter>
      </CompBody>
      <CardLabel>Sidechain</CardLabel>
      <Select name="Sidechain" value="OFF" />
    </FxCard>
  );
}

function GainCard() {
  return (
    <FxCard name="Gain" stripe="#3aa9bd">
      <GainBody>
        <GainReadout>±<GainInput aria-label="Gain" defaultValue="0.00" /></GainReadout>
        <div>
          <UnitButton type="button" $on>dB</UnitButton>
          <UnitButton type="button">%</UnitButton>
        </div>
      </GainBody>
      <Meter $height={16} />
    </FxCard>
  );
}

function Ensemble() {
  const xs = [0, 1, 2, 3, 4, 5, 6, 7, 8];
  return (
    <FxCard name="Ensemble" stripe="#2f5d85">
      <Plot height="38" viewBox="0 0 141 38" preserveAspectRatio="none">
        <path d="M23 12H116L141 36H0Z" fill="url(#floor)" />
        <path d="M19 16H120M14 21H125M8 27H131" stroke="#141414" />
        {xs.map((i) => <path key={i} d={`M${23 + i * 11.6} 12L${i * 17.6} 36`} stroke="#5a5957" strokeWidth=".9" />)}
        <path d="M0 36.500H141" stroke="#5a5957" />
        <g fill={c.blue}><circle cx="64" cy="11" r="2" /><circle cx="55" cy="17" r="2" /><circle cx="76" cy="20" r="2" /><circle cx="83" cy="17" r="2" /></g>
      </Plot>
      <Voices type="button">4 voices</Voices>
      <KnobRow $n={3} $pad="13px 0 0">
        <Knob label="Detune" value={0.22} />
        <Knob label="Spread" value={1} />
        <Knob label="Mix" tone="orange" value={0.36} />
      </KnobRow>
      <CardLabel $pad="12px 5px 3px">Motion</CardLabel>
      <Select name="Motion" value="SYMMETRIC" />
    </FxCard>
  );
}

function Stereo() {
  return (
    <FxCard name="Stereo" stripe="#8f3a80">
      <KnobRow $n={3} $pad="7px 3px 0">
        <Knob label="Mid" value={1} />
        <Knob label="Width" value={0.5} />
        <Knob label="Pan" value={0.5} from={0.5} />
      </KnobRow>
      <CenterMeter $height={10} />
    </FxCard>
  );
}

function Reverb() {
  return (
    <FxCard name="Reverb" stripe="#b062c8" bottom={9}>
      <KnobRow $n={3} $pad="6px 0 0">
        <Knob label="Decay" tone="orange" value={0.44} />
        <Knob label="Dampen" />
        <Knob label="Size" value={0.56} />
        <Knob label="Width" value={1} />
        <Knob label="Early" />
        <Knob label="Mix" tone="orange" value={0.13} />
      </KnobRow>
    </FxCard>
  );
}

function Filter() {
  return (
    <FxCard name="Filter" stripe="#b3a428">
      <Plot height="75" viewBox="0 0 141 75" preserveAspectRatio="none">
        <rect y="3" width="141" height="72" fill={c.dark} />
        <path d="M0 38.500H141" stroke="#4b4a48" />
        <path d="M12 74Q38 48 58 42Q68 39 84 38.500H141" fill="none" stroke="#b9b8b6" strokeWidth="1.500" />
      </Plot>
      <FilterButtons>
        {filterIcons.map(([n, d]) => (
          <FilterButton key={n} type="button" aria-label={n} $on={n === "High pass"}>
            <svg width="17" height="13" fill="none" stroke="currentColor" strokeWidth="1.300"><path d={d} /></svg>
          </FilterButton>
        ))}
      </FilterButtons>
      <KnobRow $n={3} $pad="7px 0 0">
        <Knob label="Cutoff" tone="orange" value={0.06} />
        <Knob label="Q" />
        <Knob label="Gain" tone="gray" value={0.75} from={0.5} color={c.muted} />
      </KnobRow>
      <SlopeRow>Filter slope<NumberField $width={61} $height={15} $size={11} defaultValue="× 1" /></SlopeRow>
    </FxCard>
  );
}

function Chorus() {
  return (
    <FxCard name="Chorus" stripe="#4b5bb0">
      <KnobRow $n={3} $pad="6px 0 0">
        <Knob label="Delay" value={0.4} />
        <Knob label="Depth" value={0.47} />
        <Knob label="Rate" value={0.47} />
        <KnobCell as="div" $gap={2}>Taps<Switch width={37} items={["2", "3"]} on="3" /></KnobCell>
        <Knob label="Spread" value={1} />
        <Knob label="Mix" tone="orange" value={0.36} />
      </KnobRow>
    </FxCard>
  );
}

function Lanes() {
  return (
    <LaneArea>
      <LaneGrid>
        {["Lane 1", "Lane 2", "Lane 3"].map((n) => (
          <LaneHead key={n}>
            <TickLabel><Tick defaultChecked />{n}</TickLabel>
            <ChipButton type="button">POLY</ChipButton>
            <ChipButton type="button">M</ChipButton>
            <Meter $span $height={10} />
            <ChipButton type="button">S</ChipButton>
          </LaneHead>
        ))}
      </LaneGrid>
      <LaneBodies>
        <LaneBody><Compressor /><GainCard /></LaneBody>
        <LaneBody><Ensemble /><Stereo /></LaneBody>
        <LaneBody><Reverb /><Filter /><Chorus /></LaneBody>
        <ScrollRail />
      </LaneBodies>
    </LaneArea>
  );
}

/* ---------- global controls ---------- */

const GlobalRow = styled(Split)`
  height: 65px;
`;

const Globals = styled.section`
  display: flex;
  padding-top: 7px;
`;

const Block = styled.div`
  display: flex;
  flex: ${(p) => (p.$grow ? 1 : "none")};
  width: ${(p) => (p.$grow ? "auto" : `${p.$width}px`)};
  height: 48px;
  padding-left: ${(p) => p.$left || 9}px;
  border-left: ${(p) => (p.$first ? "0" : `1px solid #3b3a38`)};
  white-space: nowrap;
`;

const BlockBody = styled.div`
  display: flex;
  flex-direction: column;
  gap: 4px;
`;

const BlockRow = styled.div`
  display: flex;
  gap: 1px;
`;

const UnisonBox = styled.div`
  width: 96px;
  background: #393836;
`;

const UnisonCount = styled.input`
  display: block;
  width: 100%;
  height: 15px;
  text-align: center;
  font-size: 12px;
  color: ${c.muted};
  border-bottom: 1px solid #444341;
`;

const PitchBox = styled.div`
  width: 71px;
  height: 29px;
  padding-top: 2px;
  background: ${c.screen};
`;

const LaneFoot = styled.div`
  display: flex;
  padding: 7px 9px 0;
  white-space: nowrap;
`;

const FootCell = styled.label`
  display: grid;
  grid-template-rows: 14px 34px;
  align-items: center;
  justify-items: ${(p) => (p.$left ? "stretch" : "center")};
  flex: ${(p) => (p.$left ? 1 : "none")};
  margin-left: ${(p) => p.$gap || 0}px;
  min-width: 0;
`;

const Indent = styled.span`
  padding-left: 6px;
`;

function GlobalControls() {
  return (
    <GlobalRow as="div">
      <Globals>
        <Block $first $width={141} $left={11}>
          <BlockBody>
            <TickLabel><Tick />Glide</TickLabel>
            <BlockRow>
              <NumberField aria-label="Glide time" $dim $width={72} $height={29} $size={15} defaultValue="0.00 ms" />
              <Switch dim gap={1} width={48} items={["ALWAYS", "LEGATO"]} on="ALWAYS" />
            </BlockRow>
          </BlockBody>
        </Block>
        <Block $grow>
          <BlockBody>
            <TickLabel><Tick />Global Unison</TickLabel>
            <UnisonBox>
              <UnisonCount aria-label="Unison voices" defaultValue="×1" />
              <Select name="Unison mode" value="SMOOTH" dim />
            </UnisonBox>
          </BlockBody>
          <KnobRow $n={4} $col="40px" $pad="15px 0 0 5px">
            <Knob label="Detune" tone="gray" size={20} gap={1} value={0.14} color={c.muted} />
            <Knob label="Spread" tone="gray" size={20} gap={1} color={c.muted} />
            <Knob label="Blend" tone="gray" size={20} gap={1} value={1} color={c.muted} />
            <Knob label="Bias" tone="gray" size={20} gap={1} value={0.5} from={0.5} color={c.muted} />
          </KnobRow>
        </Block>
        <Block $width={108}>
          <BlockBody>
            <span>Polyphony</span>
            <BlockRow>
              <NumberField aria-label="Polyphony" $width={38} $height={29} defaultValue="8" />
              <Switch dim gap={1} width={48} items={["RETRIG", "LEGATO"]} on="RETRIG" />
            </BlockRow>
          </BlockBody>
        </Block>
        <Block $width={92}>
          <BlockBody>
            <span>Master pitch</span>
            <PitchBox><Param name="SEMIS CENTS" value="+0.00" width={71} wide /></PitchBox>
          </BlockBody>
        </Block>
        <Block $width={79}>
          <BlockBody>
            <span>Bend Range</span>
            <NumberField aria-label="Bend range" $width={37} $height={29} defaultValue="2" />
          </BlockBody>
        </Block>
      </Globals>
      <LaneArea>
        <LaneGrid>
          {[["LANE 2", 0.71], ["LANE 3", 0.71], ["MASTER", 0.64]].map(([to, gain]) => (
            <LaneFoot key={to}>
              <FootCell>Gain<Dial name="Gain" size={34} value={gain} /></FootCell>
              <FootCell $gap={6}>Mix<Dial name="Mix" value={1} /></FootCell>
              <FootCell $left $gap={5}><Indent>Send to</Indent><Select name="Send to" value={to} /></FootCell>
            </LaneFoot>
          ))}
        </LaneGrid>
      </LaneArea>
    </GlobalRow>
  );
}

/* ---------- modulators ---------- */

const ModBar = styled.section`
  display: flex;
  padding-left: 3px;
`;

const ModPanel = styled.div`
  flex: 1;
  min-width: 0;
  padding: 4px 0 2px 1px;
  background: ${c.dark};
`;

const ModGrid = styled.div`
  display: grid;
  grid-template-columns: minmax(0, 329fr) minmax(0, 341fr) minmax(0, 341fr) minmax(0, 79fr);
  column-gap: 21px;
`;

const ScrollThumb = styled.div`
  height: 5px;
  margin: 5px 9% 0 19%;
  border-radius: 2px;
  background: #3c3b39;
`;

const Module = styled.article`
  position: relative;
  display: flex;
  height: 119px;
  border-left: 2px solid #8d8c8a;
  background: ${c.panel};
`;

const ModScreen = styled.div`
  position: relative;
  flex: 1;
  min-width: 0;
  margin: 5px 5px 5px 0;
  background: ${c.screen};
`;

const ModTop = styled.div`
  display: flex;
  height: 83px;
`;

const ModFoot = styled.div`
  display: flex;
  align-items: center;
  height: 24px;
  gap: ${(p) => p.$gap || 0}px;
  padding: 0 5px 0 9px;
`;

const DelayColumn = styled.div`
  display: flex;
  flex-direction: column;
  gap: 5px;
  align-items: center;
  width: 46px;
  flex: none;
  padding-top: 2px;
`;

const Trigger = styled.button`
  flex: none;
  display: grid;
  place-items: center;
  width: 13px;
  height: 13px;
  border-radius: 50%;
  background: ${c.blue};
  color: #1f2a3c;
`;

const Depth = styled.div`
  flex: none;
  width: 14px;
  margin: 5px 0;
  padding-top: 47px;
  background: ${(p) => (p.$hot ? "#855a43" : "#383735")};
`;

const PolarityTab = styled.div`
  flex: none;
  align-self: flex-start;
  display: grid;
  gap: 2px;
  width: 15px;
  margin-right: -10px;
  padding: 5px 4px 4px 1px;
  border-radius: 0 4px 4px 0;
  background: ${c.panel};
`;

const PolarityButton = styled.button`
  display: grid;
  place-items: center;
  height: 10px;
  background: ${(p) => (p.$on ? c.blue : "#62615f")};
  color: #262524;
`;

const Pill = styled.div`
  position: absolute;
  right: -13px;
  bottom: 1px;
  display: grid;
  padding: 2px;
  border: 2px solid ${c.panel};
  border-radius: 10px;
  background: ${c.dark};
`;

const LoopButton = styled.button`
  position: absolute;
  right: 6px;
  top: 6px;
  display: grid;
  place-items: center;
  width: 38px;
  height: 19px;
  border-radius: 3px;
  background: #2a2f39;
  color: ${c.blue};
`;

const RateGroup = styled.div`
  display: flex;
  gap: 1px;
  margin-left: 10px;
`;

const RateField = styled.input`
  width: 54px;
  height: 19px;
  border-radius: 3px 0 0 3px;
  background: #292e38;
  color: ${c.blueText};
  text-align: center;
`;

const UnitPick = styled.button`
  display: flex;
  align-items: center;
  justify-content: center;
  gap: 3px;
  width: 29px;
  height: 19px;
  border-radius: 0 3px 3px 0;
  background: #292e38;
  color: ${c.blueText};
  font-size: 11px;
`;

const TriggerButton = () => (
  <Trigger type="button" aria-label="Retrigger">
    <svg width="9" height="9" fill="none" stroke="currentColor" strokeWidth="1.500"><path d="M1.500 2L7 4.500L1.500 7M4.500 4.500L1.500 2" /></svg>
  </Trigger>
);

const Caret = () => <svg width="8" height="5" fill="currentColor"><path d="M0 0H8L4 5Z" /></svg>;

const polarity = [
  ["+", "M5 2V8M2 5H8"],
  ["±", "M5 1V6M2.500 3.500H7.500M2.500 8.500H7.500"],
  ["−", "M2.500 5H7.500"],
];

function ModShell({ name, screen, on, dots, hot, both }) {
  return (
    <Module>
      <Handle $width={27} $bottom={6}><UpText>{name}</UpText><Tick defaultChecked /></Handle>
      <ModScreen>{screen}</ModScreen>
      <Depth $hot={hot}>
        <svg width="14" height="16">
          <path d={both ? "M0 1V14L6 7.500Z" : "M0 1V7H5.500Z"} fill={hot ? "#e0c3b2" : "#cfcecc"} />
          <path d="M5 6.500H9" stroke="#5f82b5" strokeWidth="3" strokeDasharray="2 1" opacity=".7" />
          <path d="M0 8H14" stroke={c.orange} strokeWidth="1.300" />
        </svg>
      </Depth>
      <PolarityTab>
        {polarity.map(([s, d]) => (
          <PolarityButton key={s} type="button" aria-label={`Polarity ${s}`} $on={s === on}>
            <svg width="10" height="10" stroke="currentColor" strokeWidth="1.200"><path d={d} /></svg>
          </PolarityButton>
        ))}
      </PolarityTab>
      <Pill>{dots.map((d, i) => <Dot key={i} fill={typeof d === "number" ? d : 0} plus={d === "plus"} thin={d === "thin"} />)}</Pill>
    </Module>
  );
}

function EnvelopeScreen() {
  return (
    <>
      <ModTop>
        <EnvGraph height="83" viewBox="0 0 230 83" preserveAspectRatio="xMinYMid meet" fill="none">
          <path d="M81.500 5V74M157.500 5V74" stroke="#303030" />
          <path d="M5 74.500H230" stroke="#343434" />
          <path d="M5.500 5V75M38 75H57" stroke={c.blue} strokeWidth="1.800" />
          <path d="M8 75H38" stroke={c.blue} strokeWidth="1.800" strokeDasharray="6 3" />
          <g fill={c.blue}><circle cx="5.500" cy="5" r="3.500" /><circle cx="5.500" cy="75" r="3.500" /><circle cx="38" cy="75" r="3.500" /><circle cx="57" cy="75" r="3.500" /></g>
        </EnvGraph>
        <DelayColumn>
          <Knob label="DELAY" tone="navy" size={20} gap={0} font={11} color={c.blueDim} />
          <Knob label="HOLD" tone="navy" size={20} gap={0} font={11} color={c.blueDim} />
        </DelayColumn>
      </ModTop>
      <ModFoot $gap={9}>
        <TriggerButton />
        <EnvStage name="ATTACK" value="0.00 ms" curve="line" lit />
        <EnvStage name="DECAY" value="0.31 ms" curve="fall" lit />
        <EnvStage name="SUSTAIN" value="0 %" />
        <EnvStage name="RELEASE" value="36.0 ms" curve="fall" lit />
      </ModFoot>
    </>
  );
}

function LfoScreen({ rate, unit, phase, shape, children }) {
  return (
    <>
      <ModTop>
        <WaveSvg height="83" viewBox="0 0 288 83" preserveAspectRatio="none" fill="none">{children}</WaveSvg>
        <LoopButton type="button" aria-label="Loop mode">
          <svg width="28" height="12" fill="none" stroke="currentColor" strokeWidth="1.700"><path d="M0 2.500H5M4.500 2.500Q2 3 2 6Q2 9.500 5.500 9.500H14Q17.500 9.500 17.500 6Q17.500 2.500 14 2.500H7" /><path d="M9 0L13 2.800L9 5.500Z" fill="currentColor" stroke="none" /><path d="M20 3.500H28L24 8.500Z" fill="currentColor" stroke="none" /></svg>
        </LoopButton>
      </ModTop>
      <ModFoot>
        <TriggerButton />
        <RateGroup>
          <RateField aria-label="Rate" defaultValue={rate} />
          <UnitPick type="button" aria-label="Rate unit">{unit}<Caret /></UnitPick>
        </RateGroup>
        <Param name="PHASE" value={phase} width={49} line={11} />
        <PickerRow $grow $gap={3}>
          <Spin name="waveform" />
          <Select name="Waveform" value={shape} blue height={19} flex="1" caret={false} />
          <Pencil name="Edit waveform" />
        </PickerRow>
      </ModFoot>
    </>
  );
}

const GainPanel = styled.label`
  flex: none;
  width: 43px;
  overflow: hidden;
`;

const GainTitle = styled.span`
  display: block;
  padding: 0 0 12px 14px;
`;

const GainScale = styled.span`
  display: flex;
  gap: 8px;
  padding-left: 12px;
  color: #716f6c;
`;

const Fader = styled.input.attrs({ type: "range", min: 0, max: 100 })`
  appearance: none;
  writing-mode: vertical-lr;
  direction: rtl;
  width: 6px;
  height: 102px;
  background: linear-gradient(to bottom, #2b2a29 30%, #4d79bd 30%) center / 2px 100% no-repeat;
  &::-webkit-slider-thumb {
    appearance: none;
    width: 6px;
    height: 17px;
    border: 1px solid #2f2e2c;
    background: linear-gradient(#a5a4a2 45%, #333 45% 55%, #8d8c8a 55%);
  }
`;

const GainMarks = styled.span`
  display: flex;
  flex-direction: column;
  justify-content: space-between;
  height: 110px;
  margin-top: -4px;
  font-size: 9px;
  line-height: 10px;
`;

function Modulators() {
  const lfo = sine(280, 39.5, -35, 1);
  return (
    <ModBar>
      <ModPanel>
        <ModGrid>
          <ModShell name="Envelope" on="+" dots={["plus", 0.45]} screen={<EnvelopeScreen />} />
          <ModShell
            name="LFO" on="±" both dots={["plus", "thin", "thin"]}
            screen={
              <LfoScreen rate="3.420" unit="Hz" phase="−180°" shape="Sine">
                <path d="M0 39.500H288" stroke="#3b3b3b" />
                <g transform="translate(4 0)">
                  <path d={`${lfo}V39.500H0Z`} fill="url(#lfoFill)" />
                  <path d={lfo} stroke={c.blue} strokeWidth="1.700" />
                </g>
                <circle cx="30.500" cy="58.500" r="3.700" fill={c.blue} />
              </LfoScreen>
            }
          />
          <ModShell
            name="LFO" on="+" hot dots={["plus", 0.75, 0.25, 0.1, 0.3]}
            screen={
              <LfoScreen rate="2/ 16" phase="0°" shape="Custom"
                unit={<svg width="11" height="11" fill="currentColor"><path d="M3 0H10V8.500H8.600V3H4.400V9.500H3Z" /><ellipse cx="2.600" cy="9.300" rx="2" ry="1.600" /><ellipse cx="8.200" cy="8.600" rx="2" ry="1.600" /></svg>}
              >
                <path d="M0 74.500H288" stroke="#343434" />
                <path d="M5 5Q145 75 284 75H5Z" fill="url(#rampFill)" />
                <path d="M5 75.500V5Q145 75 284 75V5" stroke={c.blue} strokeWidth="1.800" />
                <circle cx="246.500" cy="73.500" r="3.700" fill={c.blue} />
              </LfoScreen>
            }
          />
        </ModGrid>
        <ScrollThumb />
      </ModPanel>
      <GainPanel>
        <GainTitle>Gain</GainTitle>
        <GainScale>
          <Fader aria-label="Master gain" defaultValue="76" />
          <GainMarks><span>+10</span><span>+0</span><span>−10</span><span>−20</span><span>−Inf</span></GainMarks>
        </GainScale>
      </GainPanel>
    </ModBar>
  );
}

/* ---------- status bar ---------- */

const StatusBar = styled.footer`
  display: flex;
  align-items: center;
  gap: 6px;
  height: 25px;
  padding-left: 3px;
  border-top: 1px solid ${c.dark};
`;

const Status = styled.output`
  flex: 1;
  height: 18px;
  padding-left: 2px;
  font-size: 11px;
  line-height: 18px;
  background: ${c.dark};
  white-space: nowrap;
`;

const Latency = styled.span`
  display: flex;
  justify-content: space-between;
  width: 104px;
  height: 18px;
  padding-left: 4px;
  font-size: 11px;
  line-height: 18px;
  background: #353432;
  color: ${c.muted};
  white-space: nowrap;
`;

const CableLayer = styled.svg`
  position: absolute;
  inset: 0;
  z-index: 5;
  width: 100%;
  height: 100%;
  pointer-events: none;
`;

const Defs = styled.svg`
  position: absolute;
  width: 0;
  height: 0;
`;

export default function App() {
  return (
    <Page>
      <GlobalStyle />
      <Defs aria-hidden="true">
        <defs>
          <linearGradient id="knobBody" x1="0" y1="0" x2="0" y2="1"><stop offset="0" stopColor="#2f2f2e" /><stop offset="1" stopColor="#3f3e3d" /></linearGradient>
          <linearGradient id="waveFill" x1="0" y1="0" x2="0" y2="1"><stop offset="0" stopColor="#3d567b" stopOpacity=".5" /><stop offset=".5" stopColor="#3d567b" stopOpacity=".2" /><stop offset="1" stopColor="#3d567b" stopOpacity=".5" /></linearGradient>
          <linearGradient id="lfoFill" x1="0" y1="0" x2="0" y2="1"><stop offset="0" stopColor="#46679a" stopOpacity=".65" /><stop offset=".5" stopColor="#46679a" stopOpacity=".15" /><stop offset="1" stopColor="#46679a" stopOpacity=".65" /></linearGradient>
          <linearGradient id="rampFill" x1="0" y1="0" x2="0" y2="1"><stop offset="0" stopColor="#46679a" stopOpacity=".65" /><stop offset="1" stopColor="#46679a" stopOpacity=".15" /></linearGradient>
          <linearGradient id="tableFill" x1="0" y1="0" x2="1" y2="1"><stop offset="0" stopColor="#36568c" /><stop offset=".5" stopColor="#30476e" /><stop offset="1" stopColor="#34558a" /></linearGradient>
          <linearGradient id="floor" x1="0" y1="0" x2="0" y2="1"><stop offset="0" stopColor="#454443" /><stop offset="1" stopColor="#1d1d1d" /></linearGradient>
          <linearGradient id="cable" gradientUnits="userSpaceOnUse" x1="0" y1="71" x2="0" y2="745">
            <stop offset="0" stopColor="#df8150" stopOpacity="0" /><stop offset=".04" stopColor="#df8150" stopOpacity=".35" /><stop offset=".07" stopColor="#df8150" /><stop offset=".91" stopColor="#df8150" /><stop offset="1" stopColor="#df8150" stopOpacity="0" />
          </linearGradient>
        </defs>
      </Defs>
      <TopBar />
      <Macros />
      <Split><Generators /><Lanes /></Split>
      <GlobalControls />
      <Modulators />
      <StatusBar>
        <Status>Set the influence this parameter has on the modulation target. Double click to remove this modulation.</Status>
        <svg width="23" height="18" fill="#b5b4b2"><path d="M0 0H4V12H6.800V18H0ZM7.800 18V12H9.800V0H13.200V12H15.200V18ZM16.200 18V12H19V0H23V18Z" /></svg>
        <Latency>
          Latency: 16.33 ms
          <svg width="12" height="18" fill="none" stroke="#a09f9d" strokeWidth="1.500"><path d="M2 17L13 6M7 17L13 11" /></svg>
        </Latency>
      </StatusBar>
      <CableLayer viewBox="0 0 1200 841" preserveAspectRatio="none" fill="none" strokeWidth="3" strokeDasharray="11 4">
        <path d="M817 71C935 205 1042 480 1046 740" stroke="#1c1b1a" opacity=".4" />
        <path d="M817 71C935 205 1022 470 1045 745" stroke="url(#cable)" />
      </CableLayer>
    </Page>
  );
}
